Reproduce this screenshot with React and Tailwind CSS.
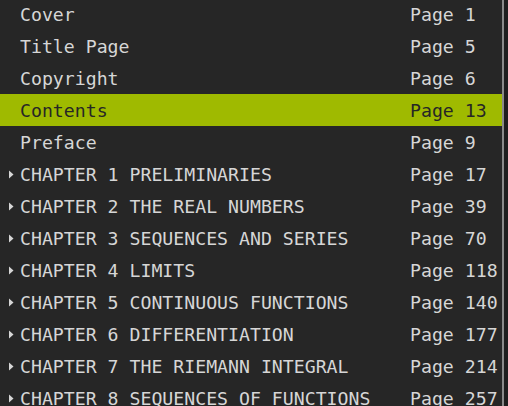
import React from "react";

const rows = [
  { t: "Cover", p: "Page 1" },
  { t: "Title Page", p: "Page 5" },
  { t: "Copyright", p: "Page 6" },
  { t: "Contents", p: "Page 13", sel: true },
  { t: "Preface", p: "Page 9" },
  { t: "CHAPTER 1 PRELIMINARIES", p: "Page 17", c: true },
  { t: "CHAPTER 2 THE REAL NUMBERS", p: "Page 39", c: true },
  { t: "CHAPTER 3 SEQUENCES AND SERIES", p: "Page 70", c: true },
  { t: "CHAPTER 4 LIMITS", p: "Page 118", c: true },
  { t: "CHAPTER 5 CONTINUOUS FUNCTIONS", p: "Page 140", c: true },
  { t: "CHAPTER 6 DIFFERENTIATION", p: "Page 177", c: true },
  { t: "CHAPTER 7 THE RIEMANN INTEGRAL", p: "Page 214", c: true },
  { t: "CHAPTER 8 SEQUENCES OF FUNCTIONS", p: "Page 257", c: true },
];

export default function App() {
  return (
    <div
      className="w-[508px] h-[406px] overflow-hidden bg-[#262626] flex"
      style={{ fontFamily: '"DejaVu Sans Mono", monospace' }}
    >
      <div className="w-[502px] flex flex-col mt-[-2px]">
        {rows.map((r, i) => (
          <div
            key={i}
            className={`h-[32px] shrink-0 flex items-center pt-[1px] text-[18.2px] leading-[31px] ${
              r.sel ? "bg-[#9fba00] text-[#262626]" : "text-[#d6d6d6]"
            }`}
          >
            <div className="w-[20px] flex items-center justify-center pl-[2px]">
              {r.c && (
                <svg width="6" height="9" viewBox="0 0 6 9">
                  <path d="M1 0.5 L5.5 4.5 L1 8.5 Z" fill="#d6d6d6" />
                </svg>
              )}
            </div>
            <div className="w-[390px] whitespace-nowrap overflow-hidden">{r.t}</div>
            <div className="whitespace-nowrap">{r.p}</div>
          </div>
        ))}
      </div>
      <div className="w-[2px] bg-[#8a8a8a]" />
      <div className="w-[4px] bg-[#1e1e1e]" />
    </div>
  );
}
